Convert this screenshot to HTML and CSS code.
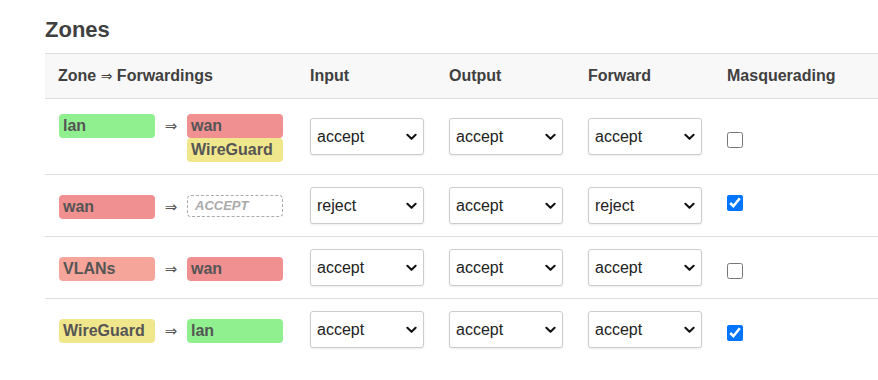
FILE: index.html
```html
<!DOCTYPE html>
<html>
<head>
<meta charset="utf-8">
<link rel="stylesheet" href="styles.css">
</head>
<body>
<div class="page">
  <h2 class="title">Zones</h2>
  <table class="zones">
    <colgroup>
      <col class="c-zone"><col class="c-sel"><col class="c-sel"><col class="c-sel"><col>
    </colgroup>
    <thead>
      <tr>
        <th>Zone <span class="harrow">⇒</span> Forwardings</th>
        <th>Input</th>
        <th>Output</th>
        <th>Forward</th>
        <th>Masquerading</th>
      </tr>
    </thead>
    <tbody>
      <tr>
        <td>
          <div class="fwd">
            <span class="badge lan">lan</span>
            <span class="arrow">⇒</span>
            <div class="dests">
              <span class="badge wan">wan</span>
              <span class="badge wg">WireGuard</span>
            </div>
          </div>
        </td>
        <td><div class="sel"><select><option>accept</option></select><svg viewBox="0 0 12 8"><path d="M1.5 1.5 L6 6 L10.5 1.5"/></svg></div></td>
        <td><div class="sel"><select><option>accept</option></select><svg viewBox="0 0 12 8"><path d="M1.5 1.5 L6 6 L10.5 1.5"/></svg></div></td>
        <td><div class="sel"><select><option>accept</option></select><svg viewBox="0 0 12 8"><path d="M1.5 1.5 L6 6 L10.5 1.5"/></svg></div></td>
        <td><input type="checkbox" class="cb down"></td>
      </tr>
      <tr>
        <td>
          <div class="fwd">
            <span class="badge wan">wan</span>
            <span class="arrow">⇒</span>
            <div class="dests">
              <span class="badge accept">ACCEPT</span>
            </div>
          </div>
        </td>
        <td><div class="sel"><select><option>reject</option></select><svg viewBox="0 0 12 8"><path d="M1.5 1.5 L6 6 L10.5 1.5"/></svg></div></td>
        <td><div class="sel"><select><option>accept</option></select><svg viewBox="0 0 12 8"><path d="M1.5 1.5 L6 6 L10.5 1.5"/></svg></div></td>
        <td><div class="sel"><select><option>reject</option></select><svg viewBox="0 0 12 8"><path d="M1.5 1.5 L6 6 L10.5 1.5"/></svg></div></td>
        <td><input type="checkbox" class="cb up" checked></td>
      </tr>
      <tr>
        <td>
          <div class="fwd">
            <span class="badge vlan">VLANs</span>
            <span class="arrow">⇒</span>
            <div class="dests">
              <span class="badge wan">wan</span>
            </div>
          </div>
        </td>
        <td><div class="sel"><select><option>accept</option></select><svg viewBox="0 0 12 8"><path d="M1.5 1.5 L6 6 L10.5 1.5"/></svg></div></td>
        <td><div class="sel"><select><option>accept</option></select><svg viewBox="0 0 12 8"><path d="M1.5 1.5 L6 6 L10.5 1.5"/></svg></div></td>
        <td><div class="sel"><select><option>accept</option></select><svg viewBox="0 0 12 8"><path d="M1.5 1.5 L6 6 L10.5 1.5"/></svg></div></td>
        <td><input type="checkbox" class="cb down"></td>
      </tr>
      <tr>
        <td>
          <div class="fwd">
            <span class="badge wg">WireGuard</span>
            <span class="arrow">⇒</span>
            <div class="dests">
              <span class="badge lan">lan</span>
            </div>
          </div>
        </td>
        <td><div class="sel"><select><option>accept</option></select><svg viewBox="0 0 12 8"><path d="M1.5 1.5 L6 6 L10.5 1.5"/></svg></div></td>
        <td><div class="sel"><select><option>accept</option></select><svg viewBox="0 0 12 8"><path d="M1.5 1.5 L6 6 L10.5 1.5"/></svg></div></td>
        <td><div class="sel"><select><option>accept</option></select><svg viewBox="0 0 12 8"><path d="M1.5 1.5 L6 6 L10.5 1.5"/></svg></div></td>
        <td><input type="checkbox" class="cb down" checked></td>
      </tr>
    </tbody>
  </table>
</div>
</body>
</html>
```

FILE: styles.css
```css
html, body {
  margin: 0;
  padding: 0;
  background: #fff;
}

body {
  font-family: "Liberation Sans", Arial, sans-serif;
  color: #404040;
}

.page {
  padding: 17px 0 0 45px;
}

.title {
  margin: 0 0 10px 0;
  font-size: 22px;
  line-height: 26px;
  font-weight: bold;
  color: #404040;
}

.zones {
  border-collapse: collapse;
  width: 833px;
  table-layout: fixed;
}

.c-zone { width: 252px; }
.c-sel { width: 139px; }

.zones th {
  background: #f8f8f8;
  border-top: 1px solid #dddddd;
  border-bottom: 1px solid #dddddd;
  height: 44px;
  padding: 0 13px;
  text-align: left;
  font-size: 16px;
  font-weight: bold;
  color: #404040;
  vertical-align: middle;
}

.harrow {
  font-family: "DejaVu Sans", sans-serif;
  font-weight: normal;
  font-size: 14px;
}

.zones td {
  padding: 12px 13px;
  border-bottom: 1px solid #dddddd;
  vertical-align: middle;
  font-size: 16px;
}

.zones tbody tr:last-child td {
  border-bottom: none;
}

.fwd {
  display: flex;
  align-items: flex-start;
  margin-top: 3px;
  margin-left: 1px;
}

.dests {
  display: flex;
  flex-direction: column;
}

.badge {
  display: block;
  box-sizing: border-box;
  width: 96px;
  height: 24px;
  line-height: 24px;
  padding-left: 4px;
  border-radius: 4px;
  font-size: 16px;
  font-weight: bold;
  color: #555555;
  white-space: nowrap;
}

.lan { background: #90f090; }
.wan { background: #f09090; }
.wg { background: #f0e68c; }
.vlan { background: #f6a59b; }

.accept {
  height: 22px;
  line-height: 20px;
  border: 1px dashed #aaaaaa;
  padding-left: 7px;
  font-size: 13px;
  font-style: italic;
  color: #aaaaaa;
  background: #fff;
}

.arrow {
  width: 32px;
  text-align: center;
  line-height: 24px;
  font-size: 15px;
  color: #555555;
  font-family: "DejaVu Sans", sans-serif;
}

.sel {
  position: relative;
  width: 114px;
  height: 37px;
}

.sel select {
  appearance: none;
  -webkit-appearance: none;
  box-sizing: border-box;
  width: 114px;
  height: 37px;
  margin: 0;
  padding: 0 0 0 6px;
  border: 1px solid #cccccc;
  border-radius: 3px;
  background: #fff;
  box-shadow: 0 1px 2px rgba(0, 0, 0, 0.08);
  font-family: "Liberation Sans", Arial, sans-serif;
  font-size: 16px;
  color: #222222;
}

.sel svg {
  position: absolute;
  right: 7px;
  top: 15px;
  width: 11px;
  height: 8px;
  pointer-events: none;
}

.sel svg path {
  fill: none;
  stroke: #111111;
  stroke-width: 2.2;
  stroke-linecap: round;
  stroke-linejoin: round;
}

.cb {
  width: 16px;
  height: 16px;
  margin: 0;
  vertical-align: middle;
  accent-color: #0075ff;
  position: relative;
}

.cb.down { top: 3px; }
.cb.up { top: -3px; }
```
